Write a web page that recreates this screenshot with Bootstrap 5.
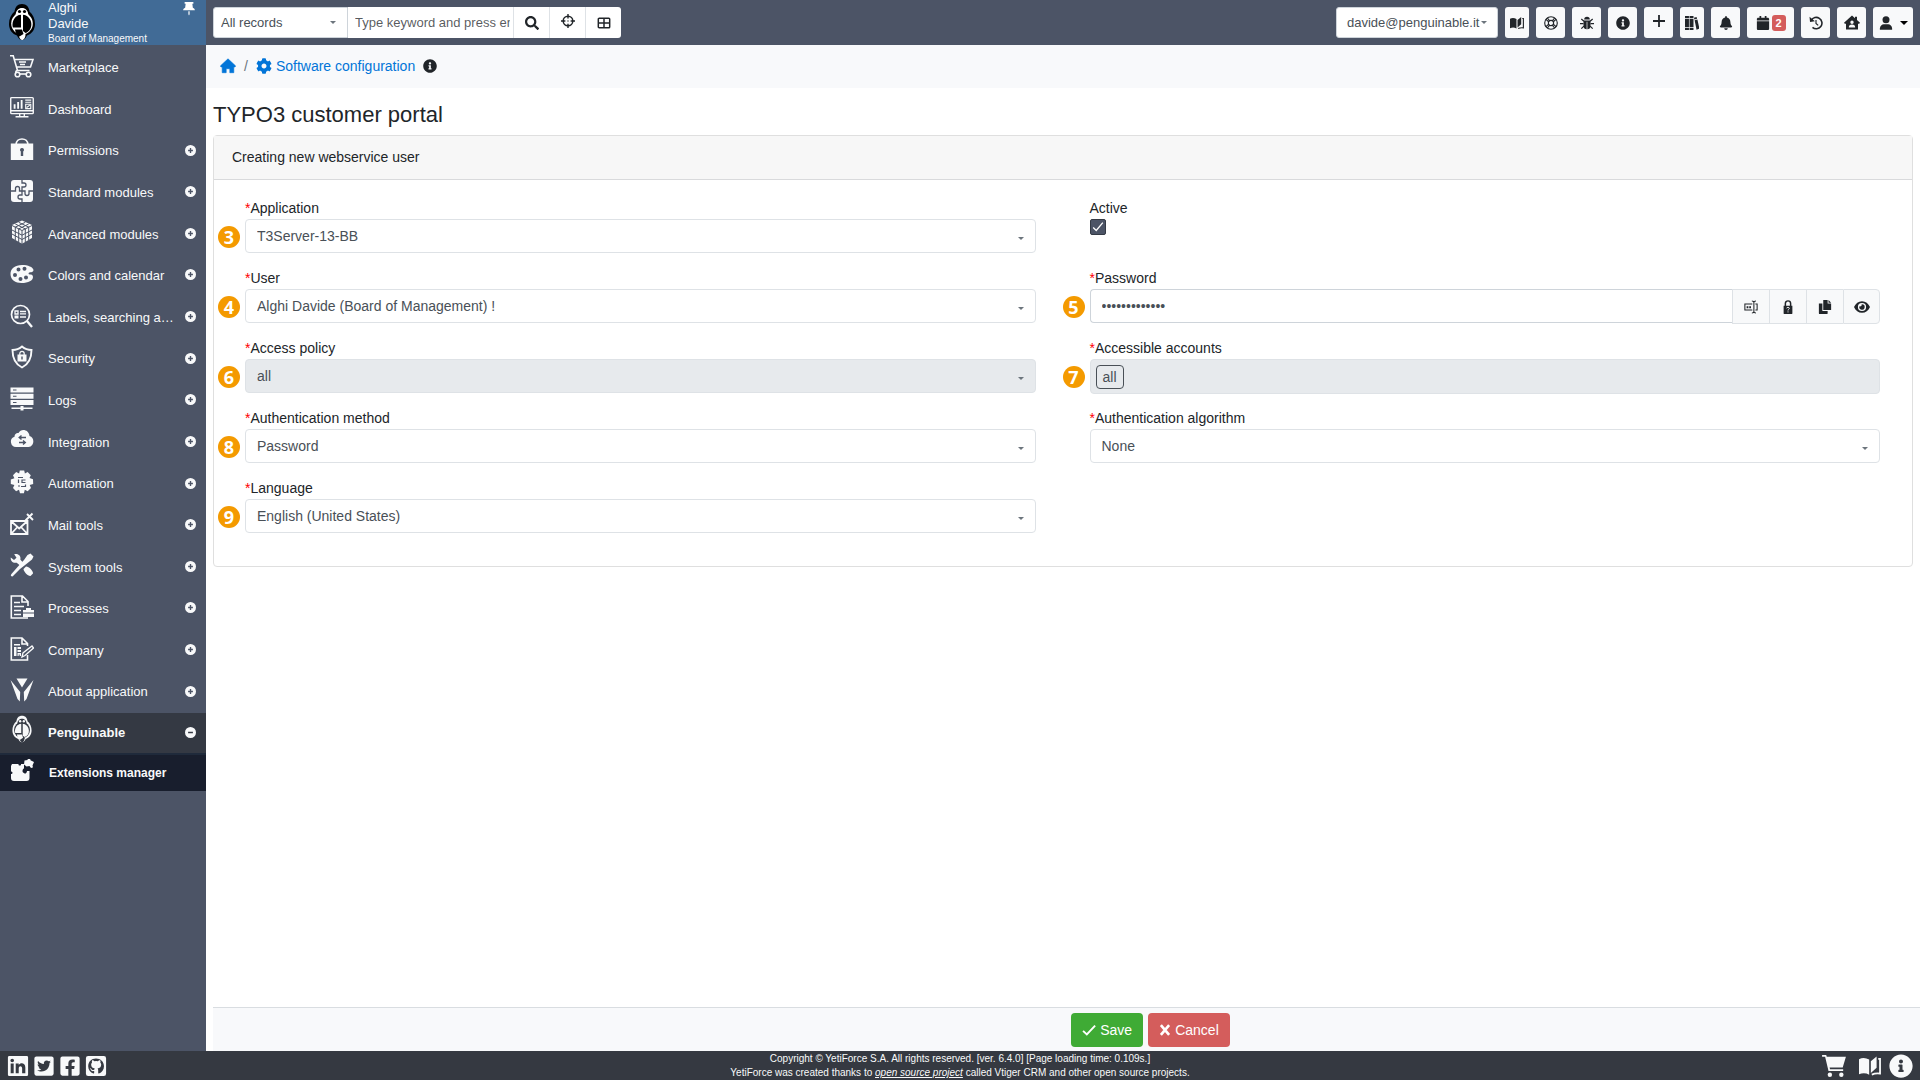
<!DOCTYPE html>
<html lang="en">
<head>
<meta charset="utf-8">
<meta name="viewport" content="width=device-width, initial-scale=1">
<title>TYPO3 customer portal</title>
<link href="https://cdn.jsdelivr.net/npm/bootstrap@5.3.0/dist/css/bootstrap.min.css" rel="stylesheet">
<style>
body{font-family:"Liberation Sans",Arial,sans-serif;font-size:14px;color:#212529;background:#fff}
.ico{width:16px;height:16px;fill:currentColor;flex:none;display:block}
.ico-sm{width:14px;height:14px}
.ico-xs{width:12px;height:12px}
/* sidebar */
.side-panel{width:206px;flex:none;background:#4c5466;color:#f8f9fa}
.user-box{height:45px;background:#416b96;padding:0 10px 0 8px;font-size:13px;line-height:16px}
.user-box .logo{width:28px;height:38px;margin-top:3px}
.user-box .unit{font-size:10px;line-height:13px}
.user-box .pin{padding:2px 0 0}
.menu-list{display:grid;grid-auto-rows:1fr;height:666px;margin-top:2px;font-size:13px}
.menu-link{display:flex;align-items:center;color:#f8f9fa;text-decoration:none;padding:0 10px}
.menu-link .ico{width:24px;height:24px;margin-bottom:4px}
.menu-link .menu-text{flex:1;margin-left:14px;white-space:nowrap;overflow:hidden;text-overflow:ellipsis}
.menu-link .ico.more{width:11px;height:11px;margin:0 0 2px 6px}
.menu-open{height:42px;background:#343943;font-weight:bold;font-size:13px;border-bottom:2px solid #1f2a3b}
.menu-open .ico:first-child{height:28px;margin-bottom:8px}
.menu-sub{height:36px;background:#181e2d;font-weight:bold;font-size:12px}
.menu-sub .menu-text{margin-left:15px}
/* top bar */
.top-bar{height:45px;background:#4c5466;padding:0 7px}
.top-bar .btn{height:31px;padding:0;background:#f8f9fa;border:0;border-radius:3px;color:#212529;display:flex;align-items:center;justify-content:center}
.top-bar .form-select,.top-bar .form-control{height:31px;font-size:13px;border-color:#ced4da;border-radius:3px;padding:0 3px 0 7px;color:#495057}
.form-select{--bs-form-select-bg-img:url("data:image/svg+xml,%3csvg xmlns='http://www.w3.org/2000/svg' viewBox='0 0 6 4'%3e%3cpath fill='%236c757d' d='M0 0h6L3 3z'/%3e%3c/svg%3e");background-size:6px 4px;background-position:right 11px top 17px}
.top-bar .scope{width:135px;flex:none;border-radius:3px 0 0 3px;background-position:right 11px center}
.top-bar .keyword{width:165px;flex:none;border-radius:0}
.search-set .btn{width:36px;border-radius:0;background:#fff;border-left:1px solid #dee2e6}
.search-set .btn:last-child{border-radius:0 3px 3px 0}
.top-bar .mailbox{width:162px;padding-left:10px;background-position:right 10px center}
.tools{gap:7px}
.top-bar .w-a{width:24px}.top-bar .w-b{width:29px}.top-bar .w-c{width:47px;gap:2px}.top-bar .w-d{width:40px;gap:7px}
.count{background:#d45d5c;color:#fff;border-radius:3px;width:14px;height:16px;font-size:11px;font-weight:bold;line-height:16px}
/* page */
.crumbs{height:43px;background:#f8f9fb;padding:0 14px 2px;gap:8px;line-height:20px}
.crumbs a{color:#0275d8;text-decoration:none}
.page-body{padding:14px 7px 0}
.page-title{font-size:22px;line-height:26px;margin:0 0 7px}
.panel{border:1px solid #dfdfdf;border-radius:4px}
.panel-head{background:#f7f7f7;border-bottom:1px solid #d9dadc;line-height:20px;padding:11px 18px 12px}
.panel-form{padding:17px 5px 33px 4px}
.panel-form .col-lg-6{padding:0 27px;min-height:70px}
.panel-form .col-lg-6:last-child{min-height:0}
.panel-form label{display:block;line-height:22px}
.must{color:#f00}
.field{height:34px;font-size:14px;line-height:20px;padding:6px 11px;border:1px solid #dee2e6;border-radius:4px;color:#495057;box-shadow:none}
.form-select.field:disabled,.tags-box{background-color:#e7eaed;color:#495057;opacity:1}
.tags-box{border:1px solid #dee2e6;border-radius:4px;height:35px;padding:5px}
.tag-item{border:1px solid #495057;border-radius:4px;line-height:22px;padding:0 6px;color:#495057;height:24px}
.tick.form-check-input{display:block;width:16px;height:16px;margin:0;border-color:#343a45;border-radius:2px}
.tick.form-check-input:checked{background-color:#4c5466;background-image:url("data:image/svg+xml,%3csvg xmlns='http://www.w3.org/2000/svg' viewBox='0 0 16 16'%3e%3cpath fill='none' stroke='white' stroke-width='1.500' d='M2.500 8.500 6 12l7.500-9'/%3e%3c/svg%3e")}
.pin-no{position:absolute;left:-27px;top:7px;width:22px;height:22px;border-radius:50%;background:#f49a00;color:#fff;font:bold 18px/22px "Open Sans","Noto Sans",sans-serif;text-align:center;pointer-events:none}
.pass-btn{width:37px;height:35px;flex:none;padding:0;background:#f8f9fa;border:1px solid #dee2e6;border-radius:0 4px 4px 0;color:#212529;display:flex;align-items:center;justify-content:center}
.pass-set .field{border-color:#ced4da}
.act-bar{height:44px;margin-left:7px;background:#f8f9fb;border-top:1px solid #d9dde1;gap:5px;padding-left:168px}
.act-bar .btn{height:34px;font-size:14px;line-height:20px;border:0;border-radius:4px;color:#fff;display:flex;align-items:center;gap:4px;padding:0 11px}
.btn-store{background:#3fab35}
.btn-drop{background:#d45d5c}
.btn-store:hover{background:#36962d}.btn-drop:hover{background:#c24e4d}
/* footer */
.foot{height:29px;background:#353941;color:#f8f9fa;font-size:10px;line-height:14px;padding:0 7px}
.foot a{color:#f8f9fa}
.foot .ico{width:22px;height:22px}
.foot .ico.wide{width:26px}
.foot .ico.big{width:24px;height:24px}
.foot .foot-side{width:260px;gap:4px}
.foot .credits{padding-top:1px}
</style>
</head>
<body class="d-flex flex-column min-vh-100">
<svg class="d-none" xmlns="http://www.w3.org/2000/svg">
<symbol id="i-search" viewBox="0 0 512 512"><path d="M505 442.700 405.300 343c-4.500-4.500-10.600-7-17-7H372c27.600-35.300 44-79.700 44-128C416 93.100 322.900 0 208 0S0 93.100 0 208s93.100 208 208 208c48.300 0 92.700-16.400 128-44v16.300c0 6.400 2.500 12.500 7 17l99.700 99.700c9.400 9.400 24.600 9.400 33.900 0l28.300-28.300c9.400-9.400 9.400-24.600.1-34zM208 336c-70.700 0-128-57.200-128-128 0-70.700 57.200-128 128-128 70.700 0 128 57.200 128 128 0 70.700-57.200 128-128 128z"/></symbol>
<symbol id="i-target" viewBox="0 0 16 16"><circle cx="8" cy="8" r="5.500" fill="none" stroke="currentColor" stroke-width="1.700"/><path d="M7.200 0h1.600v5H7.200zM7.200 11h1.600v5H7.200zM0 7.200h5v1.600H0zM11 7.200h5v1.600h-5z"/><circle cx="8" cy="8" r=".8"/></symbol>
<symbol id="i-grid" viewBox="0 0 16 16"><path fill="none" stroke="currentColor" stroke-width="1.700" d="M2.500 2.500h11a1 1 0 0 1 1 1v9a1 1 0 0 1-1 1h-11a1 1 0 0 1-1-1v-9a1 1 0 0 1 1-1zM8 2.500v11M1.500 8h13"/></symbol>
<symbol id="i-home" viewBox="0 0 16 16"><path d="M8 .8 15.700 8l-.9 1H13.800v5.700H9.800v-4H6.200v4H2.200V9H1.200L.3 8z" stroke="currentColor" stroke-width=".6" stroke-linejoin="round"/></symbol>
<symbol id="i-cog" viewBox="0 0 512 512"><path d="M487.400 315.700l-42.600-24.600c4.300-23.200 4.300-47 0-70.200l42.600-24.600c4.900-2.800 7.100-8.600 5.500-14-11.100-35.600-30-67.800-54.700-94.600-3.800-4.100-10-5.100-14.800-2.300L380.800 110c-17.900-15.400-38.500-27.300-60.800-35.100V25.800c0-5.600-3.900-10.500-9.400-11.700-36.700-8.200-74.300-7.800-109.200 0-5.500 1.200-9.400 6.100-9.400 11.700V75c-22.200 7.900-42.800 19.800-60.800 35.100L88.700 85.500c-4.900-2.800-11-1.900-14.800 2.300-24.700 26.700-43.600 58.900-54.700 94.600-1.700 5.400.6 11.200 5.500 14L67.300 221c-4.300 23.200-4.300 47 0 70.200l-42.600 24.600c-4.900 2.800-7.100 8.600-5.500 14 11.100 35.600 30 67.800 54.700 94.600 3.800 4.100 10 5.100 14.800 2.300l42.600-24.600c17.900 15.400 38.500 27.300 60.800 35.100v49.200c0 5.600 3.900 10.500 9.400 11.700 36.700 8.200 74.300 7.800 109.200 0 5.500-1.200 9.400-6.100 9.400-11.700v-49.200c22.200-7.900 42.800-19.800 60.800-35.100l42.600 24.600c4.900 2.800 11 1.900 14.800-2.300 24.700-26.700 43.600-58.900 54.700-94.600 1.500-5.500-.7-11.300-5.600-14.100zM256 336c-44.100 0-80-35.900-80-80s35.900-80 80-80 80 35.900 80 80-35.900 80-80 80z"/></symbol>
<symbol id="i-info" viewBox="0 0 512 512"><path d="M256 8C119 8 8 119.100 8 256c0 137 111 248 248 248s248-111 248-248C504 119.100 393 8 256 8zm0 110c23.200 0 42 18.800 42 42s-18.800 42-42 42-42-18.800-42-42 18.800-42 42-42zm56 254c0 6.600-5.400 12-12 12h-88c-6.600 0-12-5.400-12-12v-24c0-6.600 5.400-12 12-12h12v-64h-12c-6.600 0-12-5.400-12-12v-24c0-6.600 5.400-12 12-12h64c6.600 0 12 5.400 12 12v100h12c6.600 0 12 5.400 12 12z"/></symbol>
<symbol id="i-plusc" viewBox="0 0 16 16"><path fill-rule="evenodd" d="M8 0a8 8 0 1 1 0 16A8 8 0 0 1 8 0zM7 4.500V7H4.500v2H7v2.500h2V9h2.500V7H9V4.500z"/></symbol>
<symbol id="i-minusc" viewBox="0 0 16 16"><path fill-rule="evenodd" d="M8 0a8 8 0 1 1 0 16A8 8 0 0 1 8 0zM4.500 7v2h7V7z"/></symbol>
<symbol id="i-book" viewBox="0 0 16 14"><path d="M0 2c2.500-1.200 5-1 7.400.3v11C5 12 2.500 12 0 13zM8.600 3.500 12.800 0v8.300L8.600 12z"/><path d="M14 1.800h1.300v10.700c-2.200-.3-4-.1-6 .8" fill="none" stroke="currentColor" stroke-width="1.300"/></symbol>
<symbol id="i-life" viewBox="0 0 16 16"><g fill="none" stroke="currentColor" stroke-width="1.300"><circle cx="8" cy="8" r="7.200"/><circle cx="8" cy="8" r="3"/><path d="m2 3.600 3.600 3.200M3.600 2l3 3.500M12.400 2l-3 3.500M14 3.600l-3.600 3.200M2 12.400l3.600-3.200M3.600 14l3-3.500M12.400 14l-3-3.500M14 12.400l-3.600-3.200"/></g></symbol>
<symbol id="i-bug" viewBox="0 0 16 16"><path d="M4.800 4a3.200 3.200 0 0 1 6.400 0zM4 5h8v6a4 4 0 0 1-8 0z"/><path fill="none" stroke="currentColor" stroke-width="1.400" d="M4.500 6 1.500 3.500M11.500 6l3-2.500M4 8.800H0M12 8.800h4M4.500 11.500l-3 3M11.500 11.500l3 3"/><path d="M7.600 6.500h.8V15h-.8z" fill="#f8f9fa"/></symbol>
<symbol id="i-plus" viewBox="0 0 16 16"><path d="M7.100 2h1.800v5.100H14v1.800H8.900V14H7.100V8.900H2V7.100h5.100z"/></symbol>
<symbol id="i-books" viewBox="0 0 16 16"><path d="M0 0h4.500v2.500H0zM0 3.500h4.500v9H0zM0 13.500h4.500V16H0zM5.200 0h4.500v2.500H5.200zM5.200 3.500h4.500v9H5.200zM5.200 13.500h4.500V16H5.200zM10.200 2l3-.8.6 1.900-3 .9zM11 4.800l3.200-.9L16.500 14.500l-3.300 1.200z"/></symbol>
<symbol id="i-bell" viewBox="0 0 448 512"><path d="M224 512c35.300 0 64-28.700 64-64H160c0 35.300 28.600 64 64 64zm215.400-149.700c-19.300-20.800-55.500-52-55.500-154.300 0-77.700-54.500-139.900-127.900-155.200V32c0-17.700-14.300-32-32-32s-32 14.300-32 32v20.800C118.600 68.100 64.100 130.300 64.100 208c0 102.300-36.200 133.500-55.500 154.300-6 6.400-8.700 14.100-8.600 21.700.1 16.400 13 32 32.100 32h383.800c19.100 0 32-15.600 32.100-32 0-7.600-2.600-15.300-8.600-21.700z"/></symbol>
<symbol id="i-cal" viewBox="0 0 448 512"><path d="M0 464c0 26.500 21.500 48 48 48h352c26.500 0 48-21.500 48-48V192H0v272zm448-352c0-26.500-21.500-48-48-48h-48V12c0-6.600-5.400-12-12-12h-40c-6.600 0-12 5.400-12 12v52H160V12c0-6.600-5.400-12-12-12h-40c-6.600 0-12 5.400-12 12v52H48C21.500 64 0 85.500 0 112v48h448z"/></symbol>
<symbol id="i-hist" viewBox="0 0 16 16"><path fill="none" stroke="currentColor" stroke-width="1.800" d="M2.600 5A6.500 6.500 0 1 1 4 13"/><path d="M.6.800 1.200 6.800 6.800 6z"/><path fill="none" stroke="currentColor" stroke-width="1.300" d="M8 4.500v4l2.500 2.300"/></symbol>
<symbol id="i-homeu" viewBox="0 0 16 16"><path fill-rule="evenodd" d="M8 .5l3 2.700V1.800h2v3.100l3 2.900-.8 1H14v5.700H2V8.800H.8L0 7.800zM8 5.600A1.700 1.700 0 1 0 8 9a1.700 1.700 0 0 0 0-3.400zM4.800 12.600h6.400c0-2-1-3-3.200-3s-3.200 1-3.200 3z"/></symbol>
<symbol id="i-user" viewBox="0 0 16 16"><circle cx="8" cy="4.200" r="4"/><path d="M1 15.800v-1.500C1 11 3.500 9.600 5.500 9.400h5C12.500 9.600 15 11 15 14.300v1.500z"/></symbol>
<symbol id="i-caret" viewBox="0 0 8 4"><path d="M0 0h8L4 4z"/></symbol>
<symbol id="i-check" viewBox="0 0 16 16"><path fill="none" stroke="currentColor" stroke-width="2.200" d="M1.200 9 5.500 13 15 3"/></symbol>
<symbol id="i-x" viewBox="0 0 16 16"><path fill="none" stroke="currentColor" stroke-width="3.500" d="m2.500 1.500 11 13M13.500 1.500l-11 13"/></symbol>
<symbol id="i-rename" viewBox="0 0 16 16"><path fill="none" stroke="currentColor" stroke-width="1.200" d="M9.500 4.500H1v7h8.500M13 4.500h2v7h-2M9 1.200c1.500 0 2.300.5 2.300 1.300v11c0 .8-.8 1.300-2.300 1.300M13.700 1.200c-1.500 0-2.400.5-2.400 1.300M13.700 14.800c-1.500 0-2.400-.5-2.400-1.300"/><path d="M3 7h2v2.500H3zM6 7h2v2.500H6z"/></symbol>
<symbol id="i-lockq" viewBox="0 0 16 16"><path fill="none" stroke="currentColor" stroke-width="1.700" d="M5 7V4a3 3 0 0 1 6 0v3"/><path d="M3 6.500h10V15a1 1 0 0 1-1 1H4a1 1 0 0 1-1-1z"/><path fill="none" stroke="#f8f9fa" stroke-width="1.100" d="M6.500 9.500c0-1.500 3-1.500 3 0 0 1.200-1.500 1-1.500 2.500M8 13v1.200"/></symbol>
<symbol id="i-copy" viewBox="0 0 16 16"><path d="M6 0h5v4h4v7.500H6zM12 0l3 3h-3zM1 4h4v8.500h6V15a1 1 0 0 1-1 1H2a1 1 0 0 1-1-1z"/></symbol>
<symbol id="i-eye" viewBox="0 0 16 16"><path fill-rule="evenodd" d="M8 2.200c3.600 0 6.400 2.300 8 5.800-1.600 3.500-4.400 5.800-8 5.800S1.600 11.500 0 8c1.600-3.500 4.400-5.800 8-5.800zm0 1.700a4.100 4.100 0 1 0 0 8.200 4.100 4.100 0 0 0 0-8.200z"/><path d="M8 5.300A2.700 2.700 0 1 1 5.400 7.300a1.600 1.600 0 0 0 2.200-1.900z"/></symbol>
<symbol id="i-cart" viewBox="0 0 24 24"><path fill="none" stroke="currentColor" stroke-width="1.600" d="M0 1.800h3.200L7.500 16.500h12M4.800 5.500H23L20.500 13H7M7 16.500a2 2 0 0 0-1 2.500M9 8h7M10 10.500h5"/><g fill="none" stroke="currentColor" stroke-width="1.600"><circle cx="7.500" cy="20.500" r="2.300"/><circle cx="18.500" cy="20.500" r="2.300"/><path d="M10 20h6"/></g></symbol>
<symbol id="i-dash" viewBox="0 0 26 24"><path fill="none" stroke="currentColor" stroke-width="1.500" d="M1.800 1.800h22.400a1 1 0 0 1 1 1v15.400a1 1 0 0 1-1 1H1.800a1 1 0 0 1-1-1V2.800a1 1 0 0 1 1-1zM1 16h24M10.500 19v3M15.500 19v3M6 22.500h14"/><path d="M4 9h2v5H4zM7.800 6.500h2V14h-2zM11.600 4.500h2V14h-2zM16.500 4h6.500v1.300h-6.500zM16.500 6.300h6.500v1.200h-6.500z"/><path fill="none" stroke="currentColor" stroke-width="1.200" d="M17 9h5.500v4.800H17zM18 12.500l3.500-2.500"/></symbol>
<symbol id="i-bag" viewBox="0 0 24 24"><path fill="none" stroke="currentColor" stroke-width="1.700" d="M6 8c0-8 12-8 12 0"/><path fill-rule="evenodd" d="M0.800 6.500h22.400V23H.8zM12 11a2 2 0 0 0-1.200 3.600V19h2.400v-4.400A2 2 0 0 0 12 11z"/></symbol>
<symbol id="i-puzzle" viewBox="0 0 24 24"><rect x="1" y="1" width="22" height="22" rx="3"/><path fill="none" stroke="#4c5466" stroke-width="1.300" d="M12 1v3h2a2 2 0 1 1 0 4h-2v4M12 12H9.500V9.500a2 2 0 1 0-4 0V12H1M12 12h3v2.500a2 2 0 1 0 4 0V12h4M12 12v4h-2a2 2 0 1 0 0 4h2v3"/></symbol>
<symbol id="i-cube" viewBox="0 0 24 24"><path d="M12 .5 22 5v13l-10 5.800L2 18V5z"/><path fill="none" stroke="#4c5466" stroke-width="1" d="M2 5.500l10 5 10-5M12 10.500V24M5.300 4 15.500 9M8.700 2.300 19 7.300M18.700 4 8.500 9M15.300 2.300 5 7.300M5.300 7v13M8.700 9v13M15.300 9v13M18.700 7v13M2 10l10 5.200L22 10M2 14l10 5.500L22 14"/></symbol>
<symbol id="i-palette" viewBox="0 0 24 24"><path fill-rule="evenodd" d="M12 3C5 3 .5 6.500.5 12c0 6 5 9 11 9 7 0 11.500-2.500 11.500-6 0-2-1.500-2.500-3-2.500-2 0-2-2 0-2.200 2 0 3.500-.8 3.500-2.300C23 5 18 3 12 3zM8.500 5.500a2 2 0 1 1 0 4 2 2 0 0 1 0-4zm6-.7a2 2 0 1 1 0 4 2 2 0 0 1 0-4zM5 11a2 2 0 1 1 0 4 2 2 0 0 1 0-4zm5.500 4a2 2 0 1 1 0 4 2 2 0 0 1 0-4zm5.500-1.500a2 2 0 1 1 0 4 2 2 0 0 1 0-4z"/></symbol>
<symbol id="i-find" viewBox="0 0 24 24"><g fill="none" stroke="currentColor"><circle cx="10.500" cy="10.500" r="9" stroke-width="1.700"/><path stroke-width="2.300" d="m17 17 5 6"/><path stroke-width="1.300" d="M5 7h3v3H5zM10 7.500h6M10 9.800h6M10 13h6"/></g><path d="M4.500 11.500h4v3h-4z"/></symbol>
<symbol id="i-shield" viewBox="0 0 24 24"><path fill="none" stroke="currentColor" stroke-width="1.900" d="M12 1.500C9 4 6 5 2.500 5 2.500 13 5 19 12 22.500 19 19 21.500 13 21.500 5 18 5 15 4 12 1.500z"/><path fill="none" stroke="currentColor" stroke-width="1.200" d="M9.800 10V8.500a2.200 2.200 0 0 1 4.400 0V10"/><path fill-rule="evenodd" d="M7.500 9.500h9v7h-9zM11.300 11.500v3h1.400v-3z"/></symbol>
<symbol id="i-server" viewBox="0 0 24 24"><path fill-rule="evenodd" d="M.5.500h23v5H.5zM3 2.500v1h3.500v-1zM.5 6.700h23v5H.5zM3 8.700v1h3.500v-1zM.5 12.900h23v5H.5zM3 14.900v1h3.500v-1zM1.500 20.500h9V19h3v1.500h9V22h-9v1.500h-3V22h-9z"/></symbol>
<symbol id="i-cloud" viewBox="0 0 24 24"><path d="M6 19a5.300 5.300 0 0 1-1.500-10.300C4.500 5.500 7 4.500 8.500 5 11 0 19 1.500 19.500 8c5.500 1 5 11-1 11z"/><path fill="none" stroke="#4c5466" stroke-width="1.400" d="M16 9.500h-6M11.500 7.500l-2.300 2 2.300 2M9 14.500h5.500M13 12.500l2.300 2-2.300 2"/></symbol>
<symbol id="i-gear" viewBox="0 0 24 24"><path d="M9.800.5h4.400l.7 3 2.700-1.500 3.200 3.200L19.500 8l3.500 1.200.2 4.800-3.500 1 1.300 3-3.300 3.200-2.900-1.500-.9 3.500H10l-1-3.500-2.900 1.500L3 18l1.400-3L.8 14V9.500L4.400 8.200 3 5.200 6.200 2l2.900 1.500z"/><path fill="none" stroke="#4c5466" stroke-width="1.200" d="M8 7.500h5M8.500 9.500v3.500M15.500 10H12v2.500h3.500M15.500 14.500v2H11M8 16h2"/></symbol>
<symbol id="i-mail" viewBox="0 0 24 24"><path fill="none" stroke="currentColor" stroke-width="1.800" d="M1 9h16.500v13H1zM1.500 9.500l7.700 7 7.700-7M1.500 21.500l5.500-6M17 21.500l-5.500-6"/><path fill="none" stroke="currentColor" stroke-width="1.900" d="m15.500 8.500 7-7M17 2l6 6"/></symbol>
<symbol id="i-tools" viewBox="0 0 24 24"><path d="M20.500.5 23.500 3.500 22 6.500 17 10.500 10 16 2.500 23.500.8 23l.4-1.700L8 13.500l6-6.500 3.500-5z"/><path d="M.8 4.500 4 7l2.500-2.300L4.200 1.300c4-1 7 1.500 6.200 5.400L13 9.500l-3 3-3.300-2.800C3 10.500.2 8 .8 4.500zM13.500 16l2.500-2.500c2.500-.3 7.500 4.500 7 7L20.500 23c-2.500.3-7-4.500-7-7z"/></symbol>
<symbol id="i-proc" viewBox="0 0 24 24"><path fill="none" stroke="currentColor" stroke-width="1.600" d="M18 11V6.500L12.500 1H1.300v22H18M12 1v6h6M4 7.500h6M4 11.500h10M4 15.500h7M4 19.500h7"/><path d="M13 15h3v-2h5v2h3v7H13z"/><path d="M13 18h11" stroke="#4c5466" stroke-width="1"/></symbol>
<symbol id="i-comp" viewBox="0 0 24 24"><path fill="none" stroke="currentColor" stroke-width="1.600" d="M17.500 9V6.500L12 1H1.300v22h16.200v-5M12 1v6h5"/><path d="M4 7h6v1.500H4zM4 10h2.500v9H4zM7.500 10H11v2H7.500zM7.500 13H11v2H7.500zM7.500 16H11v3H9.700v-1.500H8.700V19H7.500z"/><path fill="none" stroke="currentColor" stroke-width="1.300" d="M12 20l1-4 9-7 1.500 2-8.500 7.500z"/></symbol>
<symbol id="i-yeti" viewBox="0 0 24 24"><path d="M6.500.5h11L12 9.500zM.5 2l9.700 12-.4 9.500L7.500 21zM23.500 2l-9.700 12 .4 9.500 2.300-2.500z"/></symbol>
<symbol id="i-ext" viewBox="0 0 24 24"><path d="M2 5h6.500c-.5 2 3 2 2.500 0h3v4.500c-2 .5-2 4.500 0 4.500 1 1.500 3 0 3-2h2.500v7c0 2-1 3-3 3H4c-2 0-3-1-3-3v-4c2 .5 2-3 0-2.500V7z"/><path d="m14.500 1.500 3-.5c0-2 3-2 3 .3L24 3l-1.500 3.500c1 2-.5 3-2 2L19.500 7l-3 .5-2.500-2z"/></symbol>
<symbol id="i-peng" viewBox="0 0 28 38"><path d="M14 1C9.500 1 7 4 6.500 8.500 3 11.500 1 16 1 21c0 6 3.500 10 8 11.500 1.500 3 3 4.500 5 4.500s3.500-1.500 5-4.500c4.500-1.500 8-5.500 8-11.500 0-5-2-9.500-5.500-12.500C21 4 18.500 1 14 1z"/><ellipse cx="14" cy="20.500" rx="10.800" ry="11" fill="var(--line)"/><path d="M13 11.500v13H4.800C3.500 18 7 12.500 13 11.500zM15 11.500c10.500 2 11 16 2.500 18.500L15 28z"/><path fill="var(--line)" d="M7.800 12.500C7 2.500 21 2.500 20.200 12.500c-4-1.300-8.400-1.300-12.400 0z"/><circle cx="11.500" cy="8.500" r="1.600"/><circle cx="16.500" cy="8.500" r="1.600"/><path fill="var(--line)" d="M10.500 31c2-2 6-2 7 .500 0 3-1.700 5.500-3.500 5.500s-3-2.500-3.500-6z"/><path d="M7 26.500h7l1.500 4.500-4 2.500c-2-.5-4-3.500-4.500-7z"/></symbol>
<symbol id="i-in" viewBox="0 0 24 24"><path fill-rule="evenodd" d="M2.500 1h19A1.500 1.500 0 0 1 23 2.500v19a1.500 1.500 0 0 1-1.500 1.500h-19A1.500 1.500 0 0 1 1 21.500v-19A1.500 1.500 0 0 1 2.500 1zM4 9.300V20h3.300V9.300zM5.700 4a2 2 0 1 0 0 4 2 2 0 0 0 0-4zM9.500 9.300V20h3.300v-5.500c0-3.200 3.700-3 3.700 0V20H20v-6.500c0-5-5.300-5.700-7.200-2.700V9.300z"/></symbol>
<symbol id="i-tw" viewBox="0 0 448 512"><path d="M400 32H48C21.500 32 0 53.500 0 80v352c0 26.500 21.500 48 48 48h352c26.500 0 48-21.500 48-48V80c0-26.500-21.500-48-48-48zm-48.900 158.800c.2 2.800.2 5.700.2 8.500 0 86.700-66 186.600-186.600 186.600-37.200 0-71.700-10.800-100.700-29.400 5.300.6 10.400.8 15.800.8 30.700 0 58.900-10.400 81.400-28-28.800-.6-53-19.500-61.300-45.500 10.100 1.500 19.200 1.500 29.600-1.200-30-6.100-52.500-32.500-52.500-64.400v-.8c8.700 4.900 18.900 7.900 29.600 8.300a65.447 65.447 0 0 1-29.200-54.600c0-12.200 3.200-23.400 8.900-33.100 32.300 39.800 80.800 65.800 135.200 68.600-9.300-44.500 24-80.600 64-80.600 18.900 0 35.900 7.900 47.900 20.700 14.800-2.800 29-8.300 41.600-15.800-4.900 15.200-15.200 28-28.800 36.100 13.200-1.400 26-5.100 37.800-10.200-8.900 13.100-20.100 24.700-32.900 34z"/></symbol>
<symbol id="i-fb" viewBox="0 0 448 512"><path d="M400 32H48A48 48 0 0 0 0 80v352a48 48 0 0 0 48 48h137.250V327.690h-63V256h63v-54.640c0-62.150 37-96.480 93.670-96.480 27.140 0 55.520 4.840 55.520 4.840v61h-31.270c-30.810 0-40.420 19.120-40.420 38.730V256h68.780l-11 71.690h-57.780V480H400a48 48 0 0 0 48-48V80a48 48 0 0 0-48-48z"/></symbol>
<symbol id="i-gh" viewBox="0 0 24 24"><path fill-rule="evenodd" d="M3.500 1h17A2.500 2.500 0 0 1 23 3.500v17a2.500 2.500 0 0 1-2.500 2.500h-17A2.500 2.500 0 0 1 1 20.500v-17A2.500 2.500 0 0 1 3.500 1zM12 3.800c-5 0-8.500 3.700-8.500 8.400 0 3.800 2.300 6.700 5.700 7.900.6.100.8-.3.800-.6v-2c-3 .6-3.500-1-3.800-1.700l-1-1.300c1.400-.4 2 1.700 3 1.800.7.100 1.400 0 1.900-.3.100-.6.300-1 .6-1.300-2.200-.3-4-1.200-4-4.300 0-1 .4-1.700 1-2.300-.1-.3-.4-1.200.1-2.400.8-.2 2 .5 2.600 1a8 8 0 0 1 3.600 0c.6-.5 1.800-1.200 2.600-1 .5 1.200.2 2.100.1 2.400.6.600 1 1.300 1 2.300 0 3.100-1.900 4-4 4.300.4.300.7 1 .7 1.900v2.900c0 .3.200.7.800.6 3.300-1.200 5.500-4.100 5.500-7.900 0-4.700-3.700-8.400-8.700-8.400z"/></symbol>
<symbol id="i-cart2" viewBox="0 0 26 24"><path d="M0 0h4.500l.6 2H26l-3.500 11.500H8.200l.5 2H23V17.500H7L3.300 2H0z"/><circle cx="8.500" cy="21.500" r="2.400"/><circle cx="21" cy="21.500" r="2.400"/></symbol>
</svg>

<div class="d-flex flex-grow-1">
  <aside class="side-panel">
    <div class="user-box d-flex">
      <svg class="logo" style="--line:#fff"><use href="#i-peng"/></svg>
      <div class="flex-grow-1 ms-2 ps-1"><div>Alghi</div><div>Davide</div><div class="unit">Board of Management</div></div>
      <button type="button" class="btn pin border-0 text-white align-self-start" aria-label="Pin menu"><svg class="ico ico-sm" viewBox="0 0 14 16"><path d="M2 0h10v2h-1.200l.6 4.500c1.500.6 2.300 1.500 2.300 3H.3c0-1.500.8-2.400 2.300-3L3.200 2H2zM6.300 10.500h1.400V14L7 15.500 6.300 14z"/></svg></button>
    </div>
    <nav class="menu-list" aria-label="Main menu">
      <a class="menu-link" href="#"><svg class="ico"><use href="#i-cart"/></svg><span class="menu-text">Marketplace</span></a>
      <a class="menu-link" href="#"><svg class="ico"><use href="#i-dash"/></svg><span class="menu-text">Dashboard</span></a>
      <a class="menu-link" href="#"><svg class="ico"><use href="#i-bag"/></svg><span class="menu-text">Permissions</span><svg class="ico more"><use href="#i-plusc"/></svg></a>
      <a class="menu-link" href="#"><svg class="ico"><use href="#i-puzzle"/></svg><span class="menu-text">Standard modules</span><svg class="ico more"><use href="#i-plusc"/></svg></a>
      <a class="menu-link" href="#"><svg class="ico"><use href="#i-cube"/></svg><span class="menu-text">Advanced modules</span><svg class="ico more"><use href="#i-plusc"/></svg></a>
      <a class="menu-link" href="#"><svg class="ico"><use href="#i-palette"/></svg><span class="menu-text">Colors and calendar</span><svg class="ico more"><use href="#i-plusc"/></svg></a>
      <a class="menu-link" href="#"><svg class="ico"><use href="#i-find"/></svg><span class="menu-text">Labels, searching a…</span><svg class="ico more"><use href="#i-plusc"/></svg></a>
      <a class="menu-link" href="#"><svg class="ico"><use href="#i-shield"/></svg><span class="menu-text">Security</span><svg class="ico more"><use href="#i-plusc"/></svg></a>
      <a class="menu-link" href="#"><svg class="ico"><use href="#i-server"/></svg><span class="menu-text">Logs</span><svg class="ico more"><use href="#i-plusc"/></svg></a>
      <a class="menu-link" href="#"><svg class="ico"><use href="#i-cloud"/></svg><span class="menu-text">Integration</span><svg class="ico more"><use href="#i-plusc"/></svg></a>
      <a class="menu-link" href="#"><svg class="ico"><use href="#i-gear"/></svg><span class="menu-text">Automation</span><svg class="ico more"><use href="#i-plusc"/></svg></a>
      <a class="menu-link" href="#"><svg class="ico"><use href="#i-mail"/></svg><span class="menu-text">Mail tools</span><svg class="ico more"><use href="#i-plusc"/></svg></a>
      <a class="menu-link" href="#"><svg class="ico"><use href="#i-tools"/></svg><span class="menu-text">System tools</span><svg class="ico more"><use href="#i-plusc"/></svg></a>
      <a class="menu-link" href="#"><svg class="ico"><use href="#i-proc"/></svg><span class="menu-text">Processes</span><svg class="ico more"><use href="#i-plusc"/></svg></a>
      <a class="menu-link" href="#"><svg class="ico"><use href="#i-comp"/></svg><span class="menu-text">Company</span><svg class="ico more"><use href="#i-plusc"/></svg></a>
      <a class="menu-link" href="#"><svg class="ico"><use href="#i-yeti"/></svg><span class="menu-text">About application</span><svg class="ico more"><use href="#i-plusc"/></svg></a>
    </nav>
    <a class="menu-link menu-open" href="#"><svg class="ico" style="--line:#343943"><use href="#i-peng"/></svg><span class="menu-text">Penguinable</span><svg class="ico more"><use href="#i-minusc"/></svg></a>
    <a class="menu-link menu-sub" href="#"><svg class="ico"><use href="#i-ext"/></svg><span class="menu-text">Extensions manager</span></a>
  </aside>

  <div class="d-flex flex-column flex-grow-1">
    <header class="top-bar d-flex align-items-center justify-content-between">
      <form class="search-set d-flex">
        <select class="form-select scope" aria-label="Search scope"><option>All records</option></select>
        <input class="form-control keyword border-0" type="text" placeholder="Type keyword and press enter" aria-label="Keyword">
        <button type="button" class="btn" aria-label="Search"><svg class="ico ico-sm"><use href="#i-search"/></svg></button>
        <button type="button" class="btn pb-1" aria-label="Advanced search"><svg class="ico ico-sm"><use href="#i-target"/></svg></button>
        <button type="button" class="btn" aria-label="Table view"><svg class="ico ico-sm"><use href="#i-grid"/></svg></button>
      </form>
      <div class="tools d-flex">
        <select class="form-select mailbox" aria-label="Mailbox"><option>davide@penguinable.it</option></select>
        <button type="button" class="btn w-a" aria-label="Manual"><svg class="ico ico-sm"><use href="#i-book"/></svg></button>
        <button type="button" class="btn w-b" aria-label="Support"><svg class="ico ico-sm"><use href="#i-life"/></svg></button>
        <button type="button" class="btn w-b" aria-label="Report a bug"><svg class="ico ico-sm"><use href="#i-bug"/></svg></button>
        <button type="button" class="btn w-b" aria-label="Information"><svg class="ico ico-sm"><use href="#i-info"/></svg></button>
        <button type="button" class="btn w-b pb-1" aria-label="Add"><svg class="ico"><use href="#i-plus"/></svg></button>
        <button type="button" class="btn w-a" aria-label="Library"><svg class="ico ico-sm"><use href="#i-books"/></svg></button>
        <button type="button" class="btn w-b" aria-label="Notifications"><svg class="ico ico-sm"><use href="#i-bell"/></svg></button>
        <button type="button" class="btn w-c" aria-label="Calendar"><svg class="ico ico-sm"><use href="#i-cal"/></svg><span class="count">2</span></button>
        <button type="button" class="btn w-b" aria-label="History"><svg class="ico ico-sm"><use href="#i-hist"/></svg></button>
        <button type="button" class="btn w-b" aria-label="Home"><svg class="ico"><use href="#i-homeu"/></svg></button>
        <button type="button" class="btn w-d" aria-label="Account"><svg class="ico ico-sm"><use href="#i-user"/></svg><svg width="8" height="4"><use href="#i-caret"/></svg></button>
      </div>
    </header>
    <nav class="crumbs d-flex align-items-center" aria-label="Breadcrumb">
      <a href="#" aria-label="Home"><svg class="ico"><use href="#i-home"/></svg></a>
      <span class="text-secondary">/</span>
      <a href="#" class="d-flex align-items-center gap-1"><svg class="ico"><use href="#i-cog"/></svg>Software configuration</a>
      <svg class="ico ico-sm"><use href="#i-info"/></svg>
    </nav>
    <main class="page-body flex-grow-1">
      <h1 class="page-title">TYPO3 customer portal</h1>
      <section class="panel">
        <div class="panel-head">Creating new webservice user</div>
        <form class="panel-form" id="user-form">
          <div class="row g-0">
            <div class="col-12 col-lg-6"><label for="f-app"><span class="must">*</span>Application</label>
              <div class="position-relative"><select id="f-app" class="form-select field"><option>T3Server-13-BB</option></select><span class="pin-no">3</span></div></div>
            <div class="col-12 col-lg-6"><label for="f-act">Active</label><input id="f-act" class="form-check-input tick" type="checkbox" checked></div>
            <div class="col-12 col-lg-6"><label for="f-user"><span class="must">*</span>User</label>
              <div class="position-relative"><select id="f-user" class="form-select field"><option>Alghi Davide (Board of Management) !</option></select><span class="pin-no">4</span></div></div>
            <div class="col-12 col-lg-6"><label for="f-pass"><span class="must">*</span>Password</label>
              <div class="pass-set position-relative d-flex"><input id="f-pass" class="form-control field rounded-end-0 border-end-0" type="password" value="abcdefghijklm" autocomplete="off">
                <button type="button" class="btn pass-btn rounded-0 border-end-0" aria-label="Generate"><svg class="ico ico-sm"><use href="#i-rename"/></svg></button>
                <button type="button" class="btn pass-btn rounded-0 border-end-0" aria-label="Check"><svg class="ico ico-sm"><use href="#i-lockq"/></svg></button>
                <button type="button" class="btn pass-btn rounded-0 border-end-0" aria-label="Copy"><svg class="ico ico-sm"><use href="#i-copy"/></svg></button>
                <button type="button" class="btn pass-btn" aria-label="Show"><svg class="ico"><use href="#i-eye"/></svg></button><span class="pin-no">5</span></div></div>
            <div class="col-12 col-lg-6"><label for="f-pol"><span class="must">*</span>Access policy</label>
              <div class="position-relative"><select id="f-pol" class="form-select field" disabled><option>all</option></select><span class="pin-no">6</span></div></div>
            <div class="col-12 col-lg-6"><label id="l-acc"><span class="must">*</span>Accessible accounts</label>
              <div class="position-relative"><div class="tags-box d-flex" role="listbox" aria-labelledby="l-acc"><span class="tag-item" role="option">all</span></div><span class="pin-no">7</span></div></div>
            <div class="col-12 col-lg-6"><label for="f-met"><span class="must">*</span>Authentication method</label>
              <div class="position-relative"><select id="f-met" class="form-select field"><option>Password</option></select><span class="pin-no">8</span></div></div>
            <div class="col-12 col-lg-6"><label for="f-alg"><span class="must">*</span>Authentication algorithm</label>
              <select id="f-alg" class="form-select field"><option>None</option></select></div>
            <div class="col-12 col-lg-6"><label for="f-lang"><span class="must">*</span>Language</label>
              <div class="position-relative"><select id="f-lang" class="form-select field"><option>English (United States)</option></select><span class="pin-no">9</span></div></div>
          </div>
        </form>
      </section>
    </main>
    <div class="act-bar d-flex align-items-center justify-content-center">
      <button type="submit" form="user-form" class="btn btn-store"><svg class="ico ico-sm"><use href="#i-check"/></svg>Save</button>
      <button type="button" class="btn btn-drop"><svg class="ico ico-xs"><use href="#i-x"/></svg>Cancel</button>
    </div>
  </div>
</div>
<footer class="foot d-flex justify-content-between">
  <div class="foot-side d-flex align-items-center">
    <a href="#" aria-label="LinkedIn"><svg class="ico"><use href="#i-in"/></svg></a>
    <a href="#" aria-label="Twitter"><svg class="ico"><use href="#i-tw"/></svg></a>
    <a href="#" aria-label="Facebook"><svg class="ico"><use href="#i-fb"/></svg></a>
    <a href="#" aria-label="GitHub"><svg class="ico"><use href="#i-gh"/></svg></a>
  </div>
  <div class="credits text-center">Copyright © YetiForce S.A. All rights reserved. [ver. 6.4.0] [Page loading time: 0.109s.]<br>YetiForce was created thanks to <a href="#"><em>open source project</em></a> called Vtiger CRM and other open source projects.</div>
  <div class="foot-side d-flex align-items-center justify-content-end gap-2">
    <a href="#" aria-label="Marketplace" class="me-1"><svg class="ico wide"><use href="#i-cart2"/></svg></a>
    <a href="#" aria-label="Manual"><svg class="ico"><use href="#i-book"/></svg></a>
    <a href="#" aria-label="Information"><svg class="ico big"><use href="#i-info"/></svg></a>
  </div>
</footer>
<script src="https://cdn.jsdelivr.net/npm/bootstrap@5.3.0/dist/js/bootstrap.bundle.min.js"></script>
</body>
</html>
